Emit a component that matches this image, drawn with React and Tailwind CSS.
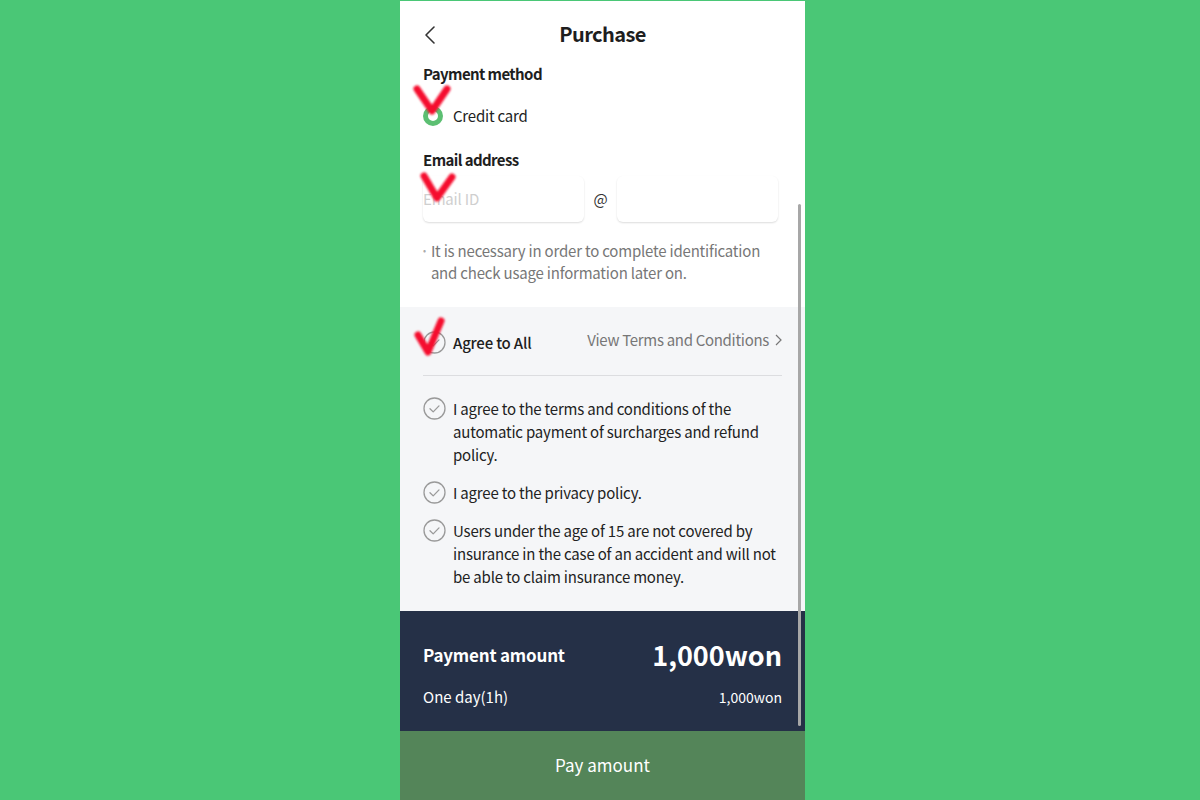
import React from 'react';

const FONT = { fontFamily: '"Noto Sans CJK KR", "Noto Sans", sans-serif' };

const TERMS = [
  'I agree to the terms and conditions of the automatic payment of surcharges and refund policy.',
  'I agree to the privacy policy.',
  'Users under the age of 15 are not covered by insurance in the case of an accident and will not be able to claim insurance money.',
];

function CheckCircle() {
  return (
    <svg width="23" height="23" viewBox="0 0 23 23" className="shrink-0">
      <circle cx="11.5" cy="11.5" r="10.5" fill="none" stroke="#9a9a9a" strokeWidth="1.3" />
      <path d="M7 11.8l3.2 3.1 5.8-6" fill="none" stroke="#9a9a9a" strokeWidth="1.3" strokeLinecap="round" strokeLinejoin="round" />
    </svg>
  );
}

// red pen marks drawn over the screenshot
function Marks() {
  return (
    <svg className="absolute left-0 top-0 pointer-events-none" width="405" height="400" viewBox="0 0 405 400">
      <defs>
        <filter id="soft" x="-20%" y="-20%" width="140%" height="140%">
          <feGaussianBlur stdDeviation="1.2" />
        </filter>
      </defs>
      <g fill="none" stroke="#f5102e" strokeWidth="7" strokeLinecap="round" strokeLinejoin="round" filter="url(#soft)">
        <path d="M17 88 L32 110 L47 88" />
        <path d="M24 175 L37 197 L52 176" />
        <path d="M18 334 L28 351 L41 320" />
      </g>
    </svg>
  );
}

export default function App() {
  return (
    <div className="w-[1200px] h-[800px] bg-[#4ac776] overflow-hidden" style={FONT}>
      <div className="relative ml-[400px] mt-px w-[405px] h-[799px] bg-white flex flex-col">
        {/* Header */}
        <div className="relative h-[63px] pt-[3px] flex items-center justify-center">
          <svg className="absolute left-[24px] top-[24px]" width="12" height="20" viewBox="0 0 12 20">
            <path d="M10 2 L2 10 L10 18" fill="none" stroke="#333" strokeWidth="1.6" strokeLinecap="round" strokeLinejoin="round" />
          </svg>
          <h1 className="text-[20px] font-bold text-[#1e1e1e] leading-none tracking-[-0.6px]">Purchase</h1>
        </div>

        {/* Payment method / email */}
        <div className="px-[23px] pb-[23px]">
          <h2 className="text-[15px] font-bold text-[#1e1e1e] leading-[20px] tracking-[-0.6px]">Payment method</h2>
          <div className="mt-[20px] h-[24px] flex items-center gap-[10px]">
            <span className="w-[20px] h-[20px] rounded-full border-[5px] border-[#5cbf72] bg-white" />
            <span className="text-[15px] text-[#222] tracking-[-0.2px]">Credit card</span>
          </div>

          <h2 className="mt-[22px] text-[15px] font-bold text-[#1e1e1e] leading-[20px] tracking-[-0.6px]">Email address</h2>
          <div className="mt-[6px] flex items-center">
            <div className="w-[161px] h-[46px] rounded-md bg-white shadow-[0_1px_2px_rgba(0,0,0,0.14)] flex items-center">
              <span className="text-[15px] text-[#cfcfcf] tracking-[-0.2px]">Email ID</span>
            </div>
            <span className="w-[33px] text-center text-[15px] text-[#333]">@</span>
            <div className="w-[161px] h-[46px] rounded-md bg-white shadow-[0_1px_2px_rgba(0,0,0,0.14)]" />
          </div>

          <div className="mt-[18px] flex gap-[5px] text-[15px] leading-[22px] text-[#777] tracking-[-0.2px]">
            <span className="text-[9px] text-[#aaa]">•</span>
            <p>It is necessary in order to complete identification and check usage information later on.</p>
          </div>
        </div>

        {/* Terms */}
        <div className="flex-1 bg-[#f5f6f8] px-[23px] pt-[23px]">
          <div className="h-[24px] flex items-center justify-between">
            <div className="flex items-center gap-[7px]">
              <svg width="23" height="23" viewBox="0 0 23 23">
                <circle cx="11.5" cy="11.5" r="10.5" fill="none" stroke="#9a9a9a" strokeWidth="1.3" />
                <path d="M7 11.8l3.2 3.1 5.8-6" fill="none" stroke="#9a9a9a" strokeWidth="1.3" strokeLinecap="round" strokeLinejoin="round" />
              </svg>
              <span className="text-[15px] font-medium text-[#1e1e1e] translate-y-[1px] tracking-[-0.2px]">Agree to All</span>
            </div>
            <div className="flex items-center gap-[6px] text-[15px] text-[#777] -translate-y-[2px] tracking-[-0.3px]">
              <span>View Terms and Conditions</span>
              <svg width="7" height="12" viewBox="0 0 7 12">
                <path d="M1 1 L6 6 L1 11" fill="none" stroke="#777" strokeWidth="1.2" />
              </svg>
            </div>
          </div>
          <div className="mt-[21px] h-px bg-[#dcdde0]" />

          <div className="mt-[21px] flex flex-col gap-[15px]">
            {TERMS.map((t, i) => (
              <div key={i} className="flex items-start gap-[7px]">
                <CheckCircle />
                <p className="text-[15px] leading-[23px] text-[#222] tracking-[-0.2px]">{t}</p>
              </div>
            ))}
          </div>
        </div>

        {/* Amount */}
        <div className="h-[120px] bg-[#253047] px-[23px] pt-[28px] text-white">
          <div className="flex items-center justify-between h-[32px]">
            <span className="text-[17px] font-bold tracking-[-0.2px]">Payment amount</span>
            <span className="text-[27px] font-bold">1,000won</span>
          </div>
          <div className="mt-[15px] flex items-center justify-between text-[15px]">
            <span>One day(1h)</span>
            <span className="text-[14px]">1,000won</span>
          </div>
        </div>

        {/* Pay button */}
        <button className="h-[69px] pb-[1px] bg-[#548559] text-white text-[17px]">Pay amount</button>

        {/* scrollbar */}
        <div className="absolute left-[398px] top-[203px] w-[3px] h-[522px] bg-[#a7a7a7] rounded-full" />

        <Marks />
      </div>
    </div>
  );
}
